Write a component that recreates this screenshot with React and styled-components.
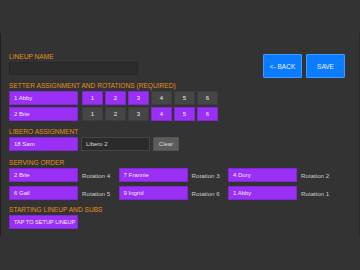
import React from 'react';
import styled, { createGlobalStyle } from 'styled-components';

const Global = createGlobalStyle`
    html, body {
        margin: 0;
        padding: 0;
        background: #333333;
    }
    body {
        width: 360px;
        height: 270px;
        overflow: hidden;
        font-family: 'Liberation Sans', Arial, sans-serif;
    }
`;

const Screen = styled.div`
    width: 360px;
    height: 270px;
    background: #333333;
    padding-top: 33px;
    box-sizing: border-box;
`;

const Panel = styled.div`
    height: 203px;
    box-sizing: border-box;
    border-left: 1px solid #1f1f1f;
    border-right: 1px solid #2a2a2a;
    padding: 20px 14px 0 8px;
`;

const TopRow = styled.div`
    display: flex;
    justify-content: space-between;
    align-items: flex-start;
`;

const Label = styled.div`
    color: #e3901f;
    font-size: 6.6px;
    line-height: 8px;
    height: 8px;
    text-transform: uppercase;
    margin-top: ${p => p.top || 0}px;
    margin-bottom: ${p => p.bottom || 1}px;
`;

const NameInput = styled.div`
    width: 129px;
    height: 13px;
    box-sizing: border-box;
    background: #2c2c2c;
    border: 1px solid #262626;
    border-radius: 1px;
`;

const NavButtons = styled.div`
    display: flex;
    gap: 4px;
    margin-top: 1px;
`;

const BlueButton = styled.div`
    width: 39px;
    height: 24px;
    box-sizing: border-box;
    background: #0b7bff;
    border: 1px solid #3d9cff;
    border-radius: 1px;
    color: #e8f2ff;
    font-size: 6.5px;
    display: flex;
    align-items: center;
    justify-content: center;
`;

const Row = styled.div`
    display: flex;
    align-items: center;
    gap: ${p => p.gap || 3}px;
    margin-bottom: ${p => p.bottom || 0}px;
`;

const PlayerBox = styled.div`
    width: ${p => p.width || 69}px;
    height: 14px;
    box-sizing: border-box;
    background: #9a30f6;
    border: 1px solid #8226d6;
    color: #f4ebff;
    font-size: ${p => p.small ? 5.6 : 6}px;
    padding-left: 4px;
    display: flex;
    align-items: center;
    white-space: nowrap;
    overflow: hidden;
`;

const NumberButton = styled.div`
    width: 21px;
    height: 14px;
    box-sizing: border-box;
    background: ${p => (p.on ? '#9a30f6' : '#464646')};
    border: 1px solid ${p => (p.on ? '#8226d6' : '#3c3c3c')};
    color: #eeeeee;
    font-size: 6px;
    display: flex;
    align-items: center;
    justify-content: center;
    margin-left: ${p => (p.first ? 1 : 0)}px;
`;

const Numbers = styled.div`
    display: flex;
    gap: 2px;
`;

const TextField = styled.div`
    width: 69px;
    height: 14px;
    box-sizing: border-box;
    background: #2b2b2b;
    border: 1px solid #454545;
    color: #dddddd;
    font-size: 6px;
    padding-left: 4px;
    display: flex;
    align-items: center;
`;

const GrayButton = styled.div`
    width: 26px;
    height: 14px;
    box-sizing: border-box;
    background: #5c5c5c;
    border: 1px solid #555555;
    border-radius: 1px;
    color: #dddddd;
    font-size: 6px;
    display: flex;
    align-items: center;
    justify-content: center;
`;

const ServeGrid = styled.div`
    display: grid;
    grid-template-columns: repeat(3, 109.5px);
    row-gap: 4px;
`;

const ServeCell = styled.div`
    display: flex;
    align-items: center;
    gap: 4px;
`;

const RotationText = styled.span`
    color: #cccccc;
    font-size: 6.2px;
    white-space: nowrap;
`;

const setters = [
    { name: '1 Abby', on: [1, 2, 3] },
    { name: '2 Brie', on: [4, 5, 6] },
];

const serving = [
    ['2 Brie', 4],
    ['7 Frannie', 3],
    ['4 Dory', 2],
    ['6 Gail', 5],
    ['9 Ingrid', 6],
    ['1 Abby', 1],
];

export default function App() {
    return (
        <Screen>
            <Global />
            <Panel>
                <TopRow>
                    <div>
                        <Label bottom={0}>Lineup Name</Label>
                        <NameInput />
                    </div>
                    <NavButtons>
                        <BlueButton>&lt;- BACK</BlueButton>
                        <BlueButton>SAVE</BlueButton>
                    </NavButtons>
                </TopRow>

                <Label top={4}>Setter Assignment and Rotations (Required)</Label>
                {setters.map((s, i) => (
                    <Row key={s.name} bottom={i === 0 ? 2 : 0}>
                        <PlayerBox>{s.name}</PlayerBox>
                        <Numbers>
                            {[1, 2, 3, 4, 5, 6].map(n => (
                                <NumberButton key={n} first={n === 1} on={s.on.includes(n)}>
                                    {n}
                                </NumberButton>
                            ))}
                        </Numbers>
                    </Row>
                ))}

                <Label top={7}>Libero Assignment</Label>
                <Row>
                    <PlayerBox>18 Sam</PlayerBox>
                    <TextField>Libero 2</TextField>
                    <GrayButton>Clear</GrayButton>
                </Row>

                <Label top={8}>Serving Order</Label>
                <ServeGrid>
                    {serving.map(([name, rot]) => (
                        <ServeCell key={name}>
                            <PlayerBox>{name}</PlayerBox>
                            <RotationText>Rotation {rot}</RotationText>
                        </ServeCell>
                    ))}
                </ServeGrid>

                <Label top={6}>Starting Lineup and Subs</Label>
                <PlayerBox small>TAP TO SETUP LINEUP</PlayerBox>
            </Panel>
        </Screen>
    );
}
